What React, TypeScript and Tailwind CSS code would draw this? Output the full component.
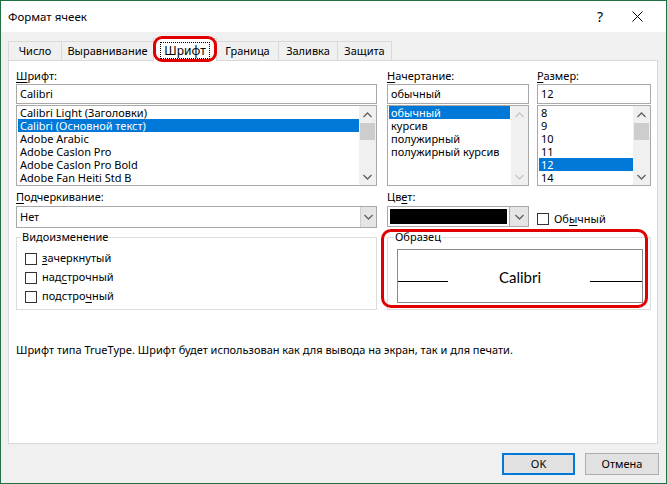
import React from 'react'

const fonts = [
  'Calibri Light (Заголовки)',
  'Calibri (Основной текст)',
  'Adobe Arabic',
  'Adobe Caslon Pro',
  'Adobe Caslon Pro Bold',
  'Adobe Fan Heiti Std B'
]
const styles = ['обычный', 'курсив', 'полужирный', 'полужирный курсив']
const sizes = ['8', '9', '10', '11', '12', '14']

const Chevron = ({ up, color = '#606060' }: { up?: boolean; color?: string }) => (
  <svg width="9" height="6" viewBox="0 0 9 6">
    <polyline
      points={up ? '0.5,5 4.5,1 8.5,5' : '0.5,1 4.5,5 8.5,1'}
      fill="none"
      stroke={color}
      strokeWidth="1.3"
    />
  </svg>
)

const ScrollBar = ({ disabled }: { disabled?: boolean }) => {
  const c = disabled ? '#c8c8c8' : '#606060'
  return (
    <div className="w-[17px] h-full bg-[#f0f0f0] flex flex-col shrink-0">
      <div className="h-[17px] flex items-center justify-center">
        <Chevron up color={c} />
      </div>
      <div className="flex-1">
        {!disabled && <div className="mx-[1px] h-[17px] bg-[#cdcdcd]" />}
      </div>
      <div className="h-[17px] flex items-center justify-center">
        <Chevron color={c} />
      </div>
    </div>
  )
}

const ListBox = ({
  items,
  selected,
  hiWidth,
  disabled
}: {
  items: string[]
  selected: number
  hiWidth: string
  disabled?: boolean
}) => (
  <div className="mt-[1px] h-[81px] border border-[#a9a9a9] bg-white flex">
    <div className="flex-1 pl-[1px] overflow-hidden">
      {items.map((t, i) => (
        <div
          key={t}
          className={
            'h-[13px] leading-[13px] pl-[2px] whitespace-nowrap ' +
            (i === selected ? 'bg-[#0078d7] text-white ' + hiWidth : '')
          }
        >
          {t}
        </div>
      ))}
    </div>
    <ScrollBar disabled={disabled} />
  </div>
)

const Label = ({ k, rest, pre = '' }: { k: string; rest: string; pre?: string }) => (
  <div className="h-[14px] leading-[14px] whitespace-nowrap">
    {pre}
    <span className="underline underline-offset-[2px]">{k}</span>
    {rest}
  </div>
)

const Input = ({ value }: { value: string }) => (
  <div className="mt-[1px] h-[20px] border border-[#a9a9a9] bg-white pl-[3px] leading-[18px]">
    {value}
  </div>
)

const Check = ({ children }: { children: React.ReactNode }) => (
  <div className="h-[19px] flex items-center">
    <div className="w-[12px] h-[12px] border border-[#333333] bg-white" />
    <div className="ml-[5px]">{children}</div>
  </div>
)

const tabs = [
  { t: 'Число', w: 'w-[54px]' },
  { t: 'Выравнивание', w: 'w-[93px]' },
  { t: 'Шрифт', w: 'w-[64px]', active: true },
  { t: 'Граница', w: 'w-[63px]' },
  { t: 'Заливка', w: 'w-[60px]' },
  { t: 'Защита', w: 'w-[55px]' }
]

const App = () => {
  return (
    <div className="w-[667px] h-[484px] border border-[#1e7145] bg-[#f0f0f0] flex flex-col font-['Noto_Sans',sans-serif] text-[11px] text-black overflow-hidden">
      {/* title bar */}
      <div className="h-[31px] bg-white flex items-center pl-[7px] pr-[7px] shrink-0">
        <div className="text-[11.5px]">Формат ячеек</div>
        <div className="ml-auto w-[30px] text-center text-[14px]">?</div>
        <div className="w-[44px] flex items-center justify-center">
          <svg width="11" height="11" viewBox="0 0 11 11">
            <path d="M0.5 0.5 L10.5 10.5 M10.5 0.5 L0.5 10.5" stroke="#000" strokeWidth="1" />
          </svg>
        </div>
      </div>

      {/* tabs */}
      <div className="h-[28px] ml-[7px] flex items-end shrink-0">
        {tabs.map((tab) =>
          tab.active ? (
            <div
              key={tab.t}
              className={
                'relative z-10 -ml-px -mb-px h-[23px] bg-white border border-b-0 border-[#d9d9d9] flex items-center justify-center ' +
                tab.w
              }
            >
              <div className="border border-dotted border-black px-[3px] leading-[15px] text-[12px]">{tab.t}</div>
              <div className="absolute -left-[1px] -top-[3px] w-[64px] h-[26px] border-[3px] border-[#e00000] rounded-[9px]" />
            </div>
          ) : (
            <div
              key={tab.t}
              className={
                '-ml-px first:ml-0 h-[19px] border border-b-0 border-[#d9d9d9] flex items-center justify-center ' +
                tab.w
              }
            >
              {tab.t}
            </div>
          )
        )}
      </div>

      {/* panel */}
      <div className="ml-[7px] w-[650px] h-[384px] border border-[#d9d9d9] bg-white pl-[7px] pt-[8px] shrink-0">
        <div className="flex">
          <div className="w-[361px]">
            <Label k="Ш" rest="рифт:" />
            <Input value="Calibri" />
            <ListBox items={fonts} selected={1} hiWidth="w-[341px]" />
          </div>
          <div className="w-[142px] ml-[10px]">
            <Label k="Н" rest="ачертание:" />
            <Input value="обычный" />
            <ListBox items={styles} selected={0} hiWidth="w-[121px]" disabled />
          </div>
          <div className="w-[114px] ml-[8px]">
            <Label k="Р" rest="азмер:" />
            <Input value="12" />
            <ListBox items={sizes} selected={4} hiWidth="w-[94px]" />
          </div>
        </div>

        <div className="flex mt-[4px]">
          <div className="w-[361px]">
            <Label k="П" rest="одчеркивание:" />
            <div className="mt-[2px] h-[22px] border border-[#a9a9a9] bg-white flex">
              <div className="flex-1 pl-[3px] leading-[20px]">Нет</div>
              <div className="w-[16px] bg-[#e5e5e5] border-l border-[#cfcfcf] flex items-center justify-center">
                <Chevron />
              </div>
            </div>
          </div>
          <div className="w-[142px] ml-[10px]">
            <Label pre="Цв" k="е" rest="т:" />
            <div className="mt-[2px] h-[21px] border border-[#a9a9a9] bg-white flex">
              <div className="flex-1 p-[2px]">
                <div className="h-full bg-black" />
              </div>
              <div className="w-[19px] bg-[#e5e5e5] border-l border-[#a9a9a9] flex items-center justify-center">
                <Chevron />
              </div>
            </div>
          </div>
          <div className="ml-[8px] pt-[21px]">
            <div className="flex items-center">
              <div className="w-[12px] h-[12px] border border-[#333333] bg-white" />
              <div className="ml-[5px]">
                Об<span className="underline underline-offset-[2px]">ы</span>чный
              </div>
            </div>
          </div>
        </div>

        <div className="flex mt-[9px]">
          <div className="relative w-[361px] h-[73px] border border-[#dcdcdc] pl-[8px] pt-[11px]">
            <span className="absolute left-[4px] -top-[8px] px-[1px] leading-[14px] bg-white">Видоизменение</span>
            <Check>
              <span className="underline underline-offset-[2px]">з</span>ачеркнутый
            </Check>
            <Check>
              над<span className="underline underline-offset-[2px]">с</span>трочный
            </Check>
            <Check>
              подстро<span className="underline underline-offset-[2px]">ч</span>ный
            </Check>
          </div>
          <div className="relative w-[264px] h-[73px] ml-[10px] border border-[#dcdcdc] pl-[9px] pt-[11px]">
            <span className="absolute left-[6px] -top-[8px] px-[1px] leading-[14px] bg-white">Образец</span>
            <div className="relative w-[246px] h-[54px] border border-[#8c8c8c] flex items-center justify-center">
              <div className="absolute left-0 top-[31px] w-[50px] h-px bg-black" />
              <div className="absolute right-0 top-[31px] w-[52px] h-px bg-black" />
              <div className="font-['Lato',sans-serif] text-[15px] pt-[3px]">Calibri</div>
            </div>
            <div className="absolute -left-[7px] -top-[9px] w-[267px] h-[79px] border-[3px] border-[#e00000] rounded-[10px]" />
          </div>
        </div>

        <div className="mt-[32px] leading-[16px]">
          Шрифт типа TrueType. Шрифт будет использован как для вывода на экран, так и для печати.
        </div>
      </div>

      {/* buttons */}
      <div className="flex justify-end pr-[7px] mt-[9px]">
        <div className="w-[73px] h-[22px] border-2 border-[#0078d7] bg-[#e1e1e1] flex items-center justify-center">
          OK
        </div>
        <div className="w-[74px] h-[22px] ml-[10px] border border-[#adadad] bg-[#e1e1e1] flex items-center justify-center">
          Отмена
        </div>
      </div>
    </div>
  )
}

export default App
